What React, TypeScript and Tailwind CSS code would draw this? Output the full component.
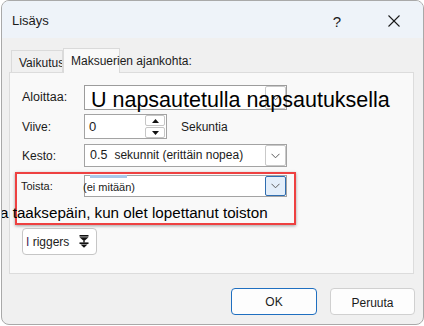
import React from 'react';

function Chevron() {
  return (
    <svg width="9" height="6" viewBox="0 0 9 6" className="block">
      <polyline points="0.5,0.8 4.5,4.8 8.5,0.8" fill="none" stroke="#5c5c5c" strokeWidth="1" />
    </svg>
  );
}

function DropButton({ active }: { active?: boolean }) {
  return (
    <div
      className={
        active
          ? 'shrink-0 w-[21px] self-stretch flex items-center justify-center rounded-[2px] border border-[#2f6db0] bg-[#e3eefa]'
          : 'shrink-0 w-[21px] self-stretch flex items-center justify-center rounded-[2px] border border-[#c9c9c9] bg-white'
      }
    >
      <Chevron />
    </div>
  );
}

function TriggerIcon() {
  return (
    <svg width="10" height="13" viewBox="0 0 10 13" className="block">
      <rect x="0.5" y="0" width="9" height="1.6" fill="#111" />
      <polygon points="0.5,2.2 9.5,2.2 5,6.2" fill="#111" />
      <rect x="4.3" y="6" width="1.4" height="1.6" fill="#111" />
      <rect x="0.5" y="7.4" width="9" height="1.6" fill="#111" />
      <polygon points="1.5,9.4 8.5,9.4 5,12.8" fill="#111" />
    </svg>
  );
}

export default function App() {
  return (
    <div className="w-[424px] h-[326px] bg-white font-['Liberation_Sans',Arial,sans-serif] text-[#1b1b1b] overflow-hidden">
      <div className="ml-[1px] w-[423px] h-[325px] border border-[#a9a9a9] rounded-[8px] overflow-hidden bg-[#f0f0f0] flex flex-col">
        {/* title bar */}
        <div className="h-[37px] shrink-0 bg-[#eef3f9] flex items-center pl-[10px] pr-[19px] pt-[3px]">
          <span className="text-[13px]">Lisäys</span>
          <div className="ml-auto flex items-center gap-[37px]">
            <span className="w-[20px] text-center text-[15px] leading-none">?</span>
            <div className="w-[20px] flex justify-center">
              <svg width="12" height="12" viewBox="0 0 12 12">
                <line x1="0.5" y1="0.5" x2="11.5" y2="11.5" stroke="#1b1b1b" strokeWidth="1.1" />
                <line x1="11.5" y1="0.5" x2="0.5" y2="11.5" stroke="#1b1b1b" strokeWidth="1.1" />
              </svg>
            </div>
          </div>
        </div>

        {/* tabs */}
        <div className="pt-[10px] pl-[9px] h-[34px] flex items-end">
          <div className="w-[52px] h-[22px] border border-b-0 border-[#dadada] bg-[#f0f0f0] pl-[7px] pt-[5px] text-[12px] leading-[14px] whitespace-nowrap overflow-hidden">
            Vaikutus
          </div>
          <div className="relative z-10 w-[57px] h-[25px] -mb-[1px] border border-b-0 border-[#dadada] bg-[#f9f9f9] pl-[7px] pt-[5px] text-[12px] leading-[14px] whitespace-nowrap">
            Maksuerien ajankohta:
          </div>
        </div>

        {/* panel */}
        <div className="ml-[7px] w-[405px] h-[202px] border border-[#dcdcdc] bg-[#f9f9f9] flex flex-col">
          {/* Aloittaa */}
          <div className="mt-[12px] h-[25px] flex items-center">
            <span className="pl-[12px] w-[74px] text-[12.5px]">Aloittaa:</span>
            <div className="w-[203px] h-[25px] border border-[#9c9c9c] bg-white flex items-start">
              <span className="relative z-10 flex-1 min-w-0 pl-[6px] pt-[3px] text-[21.5px] leading-[22px] whitespace-nowrap text-black">
                U napsautetulla napsautuksella
              </span>
              <DropButton />
            </div>
          </div>

          {/* Viive */}
          <div className="mt-[4px] h-[25px] flex items-center">
            <span className="pl-[12px] w-[74px] text-[12px]">Viive:</span>
            <div className="w-[83px] h-[25px] border border-[#a3a3a3] bg-white flex items-center">
              <span className="flex-1 pl-[4px] text-[13px]">0</span>
              <div className="w-[20px] self-stretch flex flex-col gap-[1px] mr-[1px] py-[0px]">
                <div className="flex-1 border border-[#c6c6c6] rounded-[2px] bg-white flex items-center justify-center">
                  <svg width="7" height="4" viewBox="0 0 7 4"><polygon points="0,4 7,4 3.5,0" fill="#111" /></svg>
                </div>
                <div className="flex-1 border border-[#c6c6c6] rounded-[2px] bg-white flex items-center justify-center">
                  <svg width="7" height="4" viewBox="0 0 7 4"><polygon points="0,0 7,0 3.5,4" fill="#111" /></svg>
                </div>
              </div>
            </div>
            <span className="ml-[14px] text-[12px]">Sekuntia</span>
          </div>

          {/* Kesto */}
          <div className="mt-[5px] h-[23px] flex items-center">
            <span className="pl-[12px] w-[74px] text-[12px]">Kesto:</span>
            <div className="w-[203px] h-[23px] border border-[#a3a3a3] bg-white flex items-center">
              <span className="flex-1 min-w-0 pl-[5px] whitespace-nowrap flex items-baseline">
                <span className="text-[12.5px]">0.5</span>
                <span className="ml-[7px] text-[12px]">sekunnit (erittäin nopea)</span>
              </span>
              <DropButton />
            </div>
          </div>

          {/* highlighted Toista */}
          <div className="mt-[5px] ml-[5px] w-[281px] h-[53px] border-2 border-[#ee4141] shadow-[0_1px_3px_rgba(0,0,0,0.35)] flex flex-col">
            <div className="mt-[1px] h-[22px] flex items-center">
              <span className="pl-[4px] w-[67px] text-[11px]">Toista:</span>
              <div className="w-[203px] h-[22px] border border-[#a3a3a3] bg-white flex items-start">
                <div className="flex-1 min-w-0 -mt-[1px] -ml-[2px] flex flex-col">
                  <div className="ml-[7px] w-[37px] h-[3px] bg-[#a9c9ea]" />
                  <span className="mt-[2px] text-[11px] leading-[14px] whitespace-nowrap">(ei mitään)</span>
                </div>
                <DropButton active />
              </div>
            </div>
            <span className="-ml-[17px] mt-[6px] text-[15.2px] leading-[20px] whitespace-nowrap text-black">
              a taaksepäin, kun olet lopettanut toiston
            </span>
          </div>

          {/* Triggers */}
          <div className="mt-[3px] ml-[12px] w-[75px] h-[27px] rounded-[4px] border border-[#c6c6c6] bg-white flex items-center pl-[3px] pr-[7px]">
            <span className="text-[12px]"><span className="text-[#4a1f56]">I</span> riggers</span>
            <span className="ml-auto"><TriggerIcon /></span>
          </div>
        </div>

        {/* buttons */}
        <div className="mt-[14px] pr-[8px] flex justify-end gap-[13px]">
          <button className="w-[86px] h-[27px] rounded-[4px] border border-[#1f6fc0] bg-[#fdfdfd] text-[12px] text-[#1b1b1b]">
            OK
          </button>
          <button className="w-[85px] h-[27px] rounded-[4px] border border-[#d0d0d0] bg-[#fdfdfd] text-[12px] text-[#1b1b1b] pt-[2px]">
            Peruuta
          </button>
        </div>
      </div>
    </div>
  );
}
